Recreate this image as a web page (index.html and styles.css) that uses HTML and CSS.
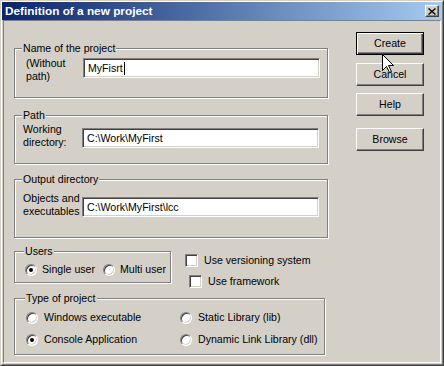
FILE: index.html
```html
<!DOCTYPE html>
<html lang="en">
<head>
  <meta charset="UTF-8" />
  <title>Definition of a new project</title>
  <link rel="stylesheet" href="styles.css">
</head>
<body>
  <div class="window">
    <div class="frame">
      <div class="titlebar">
        <span class="title">Definition of a new project</span>
        <span class="close">
          <svg width="8" height="7" viewBox="0 0 8 7"><path d="M0.5 0.5 L7.5 6.5 M7.5 0.5 L0.5 6.5" stroke="#000" stroke-width="1.4" fill="none"/></svg>
        </span>
      </div>

      <div class="client">
        <div class="main">
          <div class="group group-name">
            <div class="group-title">Name of the project</div>
            <div class="field field-name">
              <div class="field-label">(Without<br>path)</div>
              <div class="edit">MyFisrt<span class="caret"></span></div>
            </div>
          </div>

          <div class="group group-path">
            <div class="group-title">Path</div>
            <div class="field field-path">
              <div class="field-label">Working<br>directory:</div>
              <div class="edit">C:\Work\MyFirst</div>
            </div>
          </div>

          <div class="group group-output">
            <div class="group-title">Output directory</div>
            <div class="field field-output">
              <div class="field-label">Objects and<br>executables</div>
              <div class="edit">C:\Work\MyFirst\lcc</div>
            </div>
          </div>

          <div class="options">
            <div class="group group-users">
              <div class="group-title">Users</div>
              <div class="users-row">
                <div class="radio"><span class="radio-box on"></span>Single user</div>
                <div class="radio"><span class="radio-box"></span>Multi user</div>
              </div>
            </div>
            <div class="checks">
              <div class="check"><span class="check-box"></span>Use versioning system</div>
              <div class="check check-indent"><span class="check-box"></span>Use framework</div>
            </div>
          </div>

          <div class="group group-type">
            <div class="group-title">Type of project</div>
            <div class="type-grid">
              <div class="radio"><span class="radio-box"></span>Windows executable</div>
              <div class="radio"><span class="radio-box"></span>Static Library (lib)</div>
              <div class="radio"><span class="radio-box on"></span>Console Application</div>
              <div class="radio"><span class="radio-box"></span>Dynamic Link Library (dll)</div>
            </div>
          </div>
        </div>

        <div class="buttons">
          <div class="btn btn-default">Create</div>
          <div class="btn btn-cancel">Cancel</div>
          <div class="btn btn-help">Help</div>
          <div class="btn btn-browse">Browse</div>
        </div>

        <svg class="cursor" width="13" height="20" viewBox="0 0 13 20">
          <polygon points="0.5,0.5 0.5,16.5 4.5,12.5 7.5,18.5 9.5,17.5 6.5,11.5 11.5,11.5" fill="#fff" stroke="#000" stroke-width="1"/>
        </svg>
      </div>
    </div>
  </div>
</body>
</html>
```

FILE: styles.css
```css
:root {
  --face: #d4d0c8;
  --shadow: #808080;
  --dark: #404040;
  --light: #fff;
}

* {
  box-sizing: border-box;
}

body {
  margin: 0;
  font-family: 'Liberation Sans', Arial, sans-serif;
  font-size: 10.6px;
  line-height: 13px;
  color: #000;
  background: var(--face);
}

.window {
  width: 444px;
  height: 366px;
  border: 1px solid;
  border-color: var(--face) var(--dark) var(--dark) var(--face);
  background: var(--face);
}

.frame {
  height: 100%;
  border: 1px solid;
  border-color: var(--light) var(--shadow) var(--shadow) var(--light);
  display: flex;
  flex-direction: column;
}

.titlebar {
  height: 18px;
  padding: 0 3px 0 3px;
  display: flex;
  justify-content: space-between;
  align-items: center;
  background: linear-gradient(to right, #0a246a, #a6caf0);
}

.title {
  color: #fff;
  font-weight: bold;
  font-size: 11.8px;
}

.close {
  width: 14px;
  height: 12px;
  display: flex;
  align-items: center;
  justify-content: center;
  background: var(--face);
  border: 1px solid;
  border-color: var(--light) var(--dark) var(--dark) var(--light);
  box-shadow: inset -1px -1px 0 var(--shadow);
}

.close svg {
  display: block;
}

.client {
  flex: 1;
  position: relative;
  margin: 0 1px 1px 1px;
  border: 1px solid;
  border-color: var(--shadow) var(--light) var(--light) var(--shadow);
  display: flex;
}

.main {
  padding-left: 10px;
  width: 324px;
}

/* etched group frames */
.group {
  border: 1px solid var(--shadow);
  box-shadow: inset 1px 1px 0 var(--light), 1px 1px 0 var(--light);
  padding-left: 8px;
}

.group-title {
  margin: -7px 0 0 -1px;
  padding: 0 1px;
  width: fit-content;
  background: var(--face);
}

.group-name { margin-top: 27px; height: 50px; width: 314px; }
.group-path { margin-top: 17px; height: 49px; width: 314px; }
.group-output { margin-top: 15px; height: 59px; width: 314px; }
.group-users { height: 32px; width: 157px; padding-left: 10px; }
.group-type { margin-top: 10px; height: 57px; width: 311px; padding-left: 11px; }

.field {
  display: flex;
  align-items: flex-start;
}

.field-name { margin-top: 2px; }
.field-path { margin-top: 1px; }
.field-output { margin-top: 6px; }

.field-label {
  width: 59px;
}

.field-name .field-label {
  margin-left: 3px;
  width: 57px;
}

.edit {
  margin-top: 5px;
  width: 237px;
  height: 20px;
  padding: 0 2px;
  display: flex;
  align-items: center;
  background: #fff;
  border: 1px solid;
  border-color: var(--shadow) var(--light) var(--light) var(--shadow);
  box-shadow: inset 1px 1px 0 var(--dark), inset -1px -1px 0 var(--face);
  padding-left: 4px;
}

.field-name .edit {
  margin-top: 1px;
}

.caret {
  width: 1px;
  height: 13px;
  margin-left: 1px;
  background: #000;
}

.options {
  margin-top: 13px;
  display: flex;
}

.users-row {
  margin-top: 5px;
  display: flex;
  gap: 8px;
}

.radio {
  display: flex;
  align-items: center;
  gap: 5px;
  height: 13px;
}

.radio-box {
  width: 12px;
  height: 12px;
  border-radius: 50%;
  border: 1px solid;
  border-color: var(--shadow) var(--light) var(--light) var(--shadow);
  box-shadow: inset 1px 1px 0 var(--dark), inset -1px -1px 0 var(--face);
  background: #fff;
  display: flex;
  align-items: center;
  justify-content: center;
}

.radio-box.on::after {
  content: "";
  width: 4px;
  height: 4px;
  border-radius: 50%;
  background: #000;
}

.type-grid {
  margin-top: 6px;
  display: grid;
  grid-template-columns: 154px 1fr;
  row-gap: 9px;
}

.type-grid .radio {
  gap: 6px;
}

.checks {
  margin: 3px 0 0 14px;
  display: flex;
  flex-direction: column;
  gap: 8px;
}

.check {
  display: flex;
  align-items: center;
  gap: 6px;
  height: 13px;
}

.check-indent {
  margin-left: 4px;
}

.check-box {
  width: 13px;
  height: 13px;
  background: #fff;
  border: 1px solid;
  border-color: var(--shadow) var(--light) var(--light) var(--shadow);
  box-shadow: inset 1px 1px 0 var(--dark), inset -1px -1px 0 var(--face);
}

.buttons {
  margin: 11px 0 0 28px;
  display: flex;
  flex-direction: column;
}

.btn {
  width: 68px;
  height: 23px;
  display: flex;
  align-items: center;
  justify-content: center;
  border: 1px solid;
  border-color: var(--light) var(--dark) var(--dark) var(--light);
  box-shadow: inset -1px -1px 0 var(--shadow);
}

.btn-default {
  border-color: #000;
  box-shadow: inset 1px 1px 0 var(--light), inset -1px -1px 0 var(--dark), inset -2px -2px 0 var(--shadow);
}

.btn-cancel { margin-top: 8px; }
.btn-help { margin-top: 7px; }
.btn-browse { margin-top: 12px; }

.cursor {
  position: absolute;
  left: 378px;
  top: 33px;
}
```
